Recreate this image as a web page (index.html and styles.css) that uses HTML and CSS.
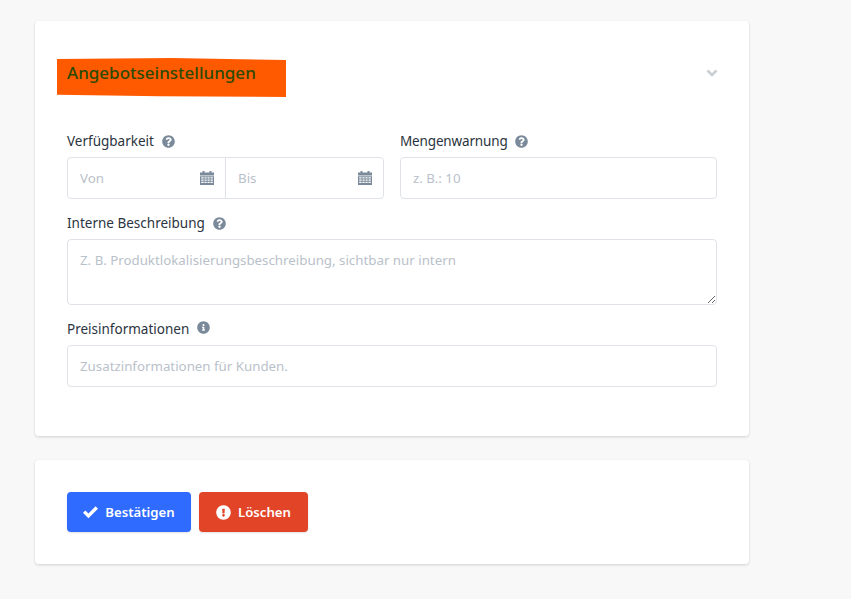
FILE: index.html
```html
<!DOCTYPE html>
<html lang="de">
<head>
<meta charset="utf-8">
<title>Angebotseinstellungen</title>
<link rel="stylesheet" href="styles.css">
</head>
<body>
<svg class="defs" width="0" height="0" aria-hidden="true">
  <symbol id="q" viewBox="0 0 512 512"><path d="M504 256c0 137-111 248-248 248S8 393 8 256 119 8 256 8s248 111 248 248zM262.700 90c-54.500 0-89.300 23-116.600 63.800-3.500 5.300-2.400 12.400 2.700 16.300l34.700 26.300c5.200 3.900 12.600 3 16.700-2.100 17.900-22.700 30.100-35.800 57.300-35.800 20.400 0 45.700 13.100 45.700 32.900 0 15-12.400 22.700-32.600 34-23.600 13.200-54.800 29.700-54.800 70.900V300c0 6.600 5.400 12 12 12h56c6.600 0 12-5.400 12-12v-1.300c0-28.600 83.400-29.700 83.400-107.100C379.200 133.300 318.800 90 262.700 90zM256 339c-25.400 0-46 20.600-46 46s20.600 46 46 46 46-20.600 46-46-20.600-46-46-46z"/></symbol>
  <symbol id="i" viewBox="0 0 512 512"><path d="M256 8C119 8 8 119 8 256s111 248 248 248 248-111 248-248S393 8 256 8zm0 110c23.200 0 42 18.800 42 42s-18.800 42-42 42-42-18.800-42-42 18.800-42 42-42zm56 254c0 6.600-5.400 12-12 12h-88c-6.600 0-12-5.400-12-12v-24c0-6.600 5.400-12 12-12h12v-64h-12c-6.600 0-12-5.400-12-12v-24c0-6.600 5.400-12 12-12h64c6.600 0 12 5.400 12 12v100h12c6.600 0 12 5.400 12 12v24z"/></symbol>
  <symbol id="cal" viewBox="0 0 14 14"><path d="M2.500 0h2v1.500h5V0h2v1.500H14V4.500H0V1.500h2.500zM0 5.200h14V14H0zm1.200 1.100v1.300h2.400V6.300zm3.300 0v1.300h2.100V6.300zm3 0v1.300h2.100V6.300zm3 0v1.300h2.300V6.300zM1.200 8.500v1.300h2.400V8.500zm3.300 0v1.300h2.100V8.500zm3 0v1.300h2.100V8.500zm3 0v1.300h2.300V8.500zM1.200 10.700V12h2.400v-1.300zm3.300 0V12h2.100v-1.300zm3 0V12h2.100v-1.300zm3 0V12h2.300v-1.300z"/></symbol>
</svg>
<main class="page">
  <section class="card card-settings">
    <header class="card-head">
      <h2 class="title">Angebotseinstellungen</h2>
      <svg class="chevron" viewBox="0 0 12 8" aria-hidden="true"><path d="M1.500 1.500 6 6l4.500-4.500"/></svg>
    </header>
    <div class="row">
      <div class="field">
        <label class="label">Verfügbarkeit <svg class="help"><use href="#q"/></svg></label>
        <div class="range">
          <div class="date"><input class="bare" placeholder="Von"><svg class="cal"><use href="#cal"/></svg></div>
          <div class="date"><input class="bare" placeholder="Bis"><svg class="cal"><use href="#cal"/></svg></div>
        </div>
      </div>
      <div class="field">
        <label class="label label-tight">Mengenwarnung <svg class="help"><use href="#q"/></svg></label>
        <input class="input" placeholder="z. B.: 10">
      </div>
    </div>
    <div class="field">
      <label class="label">Interne Beschreibung <svg class="help"><use href="#q"/></svg></label>
      <textarea class="input area" placeholder="Z. B. Produktlokalisierungsbeschreibung, sichtbar nur intern"></textarea>
    </div>
    <div class="field">
      <label class="label">Preisinformationen <svg class="help help-up"><use href="#i"/></svg></label>
      <input class="input" placeholder="Zusatzinformationen für Kunden.">
    </div>
  </section>
  <section class="card card-actions">
    <button class="btn btn-blue" type="button">
      <svg class="btn-icon" viewBox="0 0 16 16" aria-hidden="true"><path d="M5.800 14.200 0 8.400l2.600-2.600 3.200 3.200 7.600-7.600L16 4z"/></svg>Bestätigen
    </button>
    <button class="btn btn-red" type="button">
      <svg class="btn-icon" viewBox="0 0 512 512" aria-hidden="true"><path d="M504 256c0 137-111 248-248 248S8 393 8 256 119 8 256 8s248 111 248 248zm-248 50c-25.400 0-46 20.600-46 46s20.600 46 46 46 46-20.600 46-46-20.600-46-46-46zm-43.700-165.300 7.400 136c.3 6.400 5.600 11.300 12 11.300h48.500c6.400 0 11.700-5 12-11.300l7.400-136c.4-6.900-5.100-12.700-12-12.700h-63.400c-6.900 0-12.400 5.800-12 12.700z"/></svg>Löschen
    </button>
  </section>
</main>
</body>
</html>
```
FILE: styles.css
```css
* { box-sizing: border-box; }
html, body { margin: 0; height: 100%; }
body {
  background: #f8f8f8;
  font-family: "Noto Sans", "Liberation Sans", sans-serif;
  color: #2b3440;
  overflow: hidden;
}
.defs { position: absolute; }
.page { width: 714px; margin-left: 35px; padding-top: 21px; display: flex; flex-direction: column; gap: 24px; }
.card { background: #fff; border-radius: 4px; box-shadow: 0 1px 3px rgba(0,0,0,.16); padding: 0 32px; }
.card-settings { height: 415px; padding-top: 37px; }
.card-actions { height: 104px; padding-top: 32px; display: flex; align-items: flex-start; gap: 8px; }
.card-head { display: flex; justify-content: space-between; align-items: flex-start; height: 67px; }
.title {
  margin: 0 0 0 -10px;
  width: 229px;
  height: 39px;
  padding: 4px 0 0 10px;
  font-size: 17px;
  line-height: 22px;
  font-weight: 500;
  color: #2e4a00;
  background: #ff5a00;
  clip-path: polygon(0 1px, 50% 0, 100% 2px, 100% 100%, 45% 98%, 0 94%);
}
.chevron { width: 12px; height: 8px; margin-top: 11px; margin-right: -1px; fill: none; stroke: #c9ced3; stroke-width: 2.600; }
.row { display: grid; grid-template-columns: 317px 317px; gap: 16px; }
.field { display: flex; flex-direction: column; margin-bottom: 8px; }
.label { display: flex; align-items: center; gap: 8px; height: 16px; margin-bottom: 8px; margin-top: 8px; font-size: 13.500px; line-height: 16px; color: #2b3440; white-space: nowrap; }
.label-tight { letter-spacing: -.15px; gap: 7px; }
.help { width: 13px; height: 13px; fill: #7b8a9a; }
.help-up { margin-top: -4px; }
.input, .range {
  width: 100%;
  border: 1px solid #dfe3e8;
  border-radius: 4px;
  background: #fff;
  height: 42px;
  font-family: inherit;
  font-size: 13.300px;
}
.input { padding: 0 12px; outline: none; display: block; color: #2b3440; }
.area { height: 66px; padding-top: 11px; line-height: 18px; resize: vertical; }
.range { display: grid; grid-template-columns: 158px minmax(0, 1fr); }
.date { display: flex; align-items: center; padding-right: 11px; min-width: 0; }
.date:first-child { border-right: 1px solid #dfe3e8; }
.bare { flex: 1; width: 0; min-width: 0; border: 0; outline: 0; padding: 0 12px; background: none; font: inherit; }
.cal { width: 14px; height: 14px; fill: #7b8a9a; flex: none; }
::placeholder { color: #b9c1ca; opacity: 1; }
.btn {
  display: flex;
  align-items: center;
  justify-content: center;
  gap: 7px;
  height: 40px;
  border: 0;
  border-radius: 4px;
  padding: 0;
  color: #fff;
  font-family: "Noto Sans", sans-serif;
  font-size: 13.200px;
  font-weight: 600;
  box-shadow: 0 1px 2px rgba(0,0,0,.12);
}
.btn-blue { width: 124px; background: #2f6bff; }
.btn-red { width: 109px; background: #e24428; }
.btn-icon { width: 15px; height: 15px; fill: #fff; }
```
